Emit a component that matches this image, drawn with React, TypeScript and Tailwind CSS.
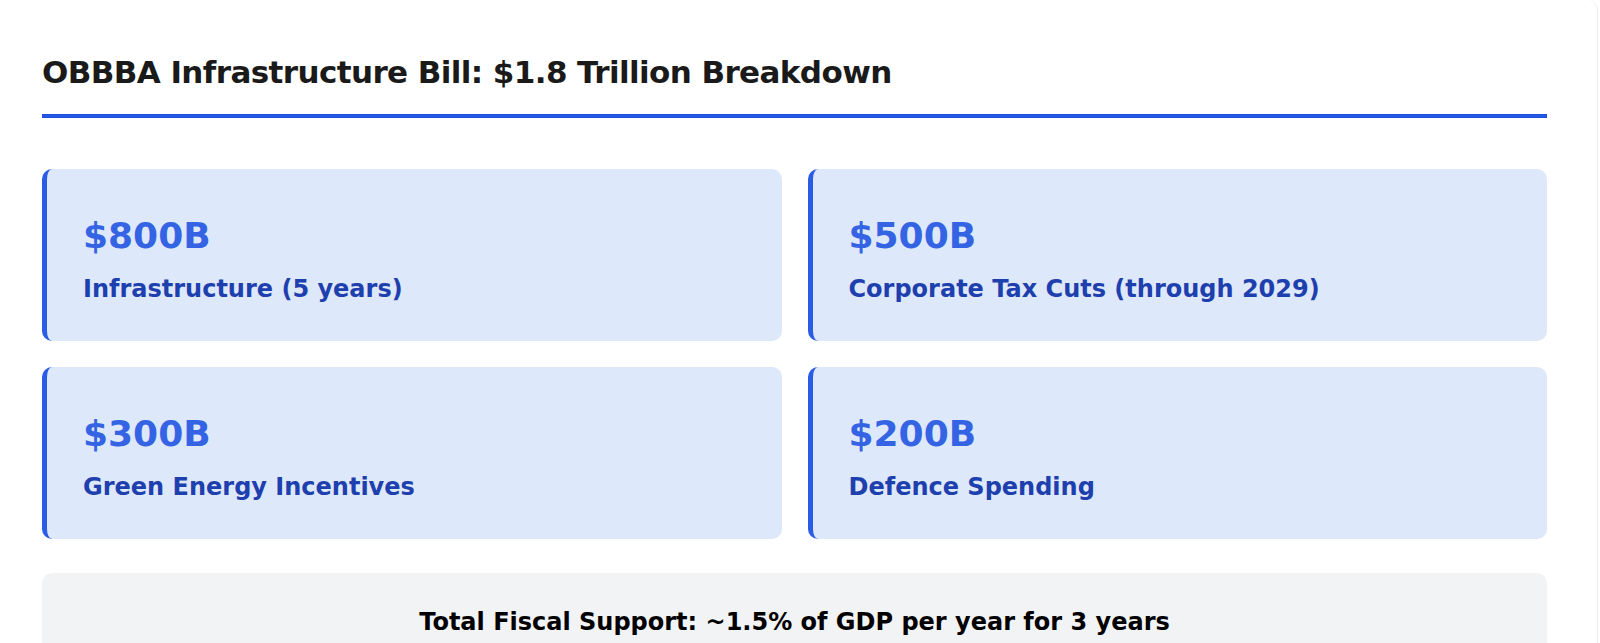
import React from 'react';

const items = [
  { amount: '$800B', label: 'Infrastructure (5 years)' },
  { amount: '$500B', label: 'Corporate Tax Cuts (through 2029)' },
  { amount: '$300B', label: 'Green Energy Incentives' },
  { amount: '$200B', label: 'Defence Spending' },
];

const App = () => {
  return (
    <div className="min-h-screen bg-white font-['DejaVu_Sans',Verdana,sans-serif]">
      <div className="w-[1598px] h-[643px] overflow-hidden border-r border-[#ececec] rounded-tr-[10px] pl-[42px] pr-[50px]">
        {/* Title */}
        <h2 className="pt-[54px] text-[31px] leading-[36px] font-bold tracking-[-0.6px] text-[#1a1a1a]">
          OBBBA Infrastructure Bill: $1.8 Trillion Breakdown
        </h2>
        <div className="mt-[24px] h-[4px] bg-[#2259e8] border border-[#1c4fd6]"></div>

        {/* Breakdown cards */}
        <div className="mt-[51px] grid grid-cols-2 gap-[26px]">
          {items.map((item) => (
            <div
              key={item.amount}
              className="h-[172px] rounded-[10px] border-l-[5px] border-[#2b5ce6] bg-[#dee8fb] pl-[36px] pt-[45px]"
            >
              <div className="text-[36px] leading-[44px] font-bold text-[#3464e4]">{item.amount}</div>
              <div className="mt-[15px] text-[24px] leading-[32px] font-bold text-[#1e3fae]">{item.label}</div>
            </div>
          ))}
        </div>

        {/* Summary */}
        <div className="mt-[34px] h-[120px] rounded-[10px] bg-[#f2f3f5] pt-[33px] text-center">
          <p className="text-[24px] leading-[32px] font-bold text-black">
            Total Fiscal Support: ~1.5% of GDP per year for 3 years
          </p>
        </div>
      </div>
    </div>
  );
};

export default App;
